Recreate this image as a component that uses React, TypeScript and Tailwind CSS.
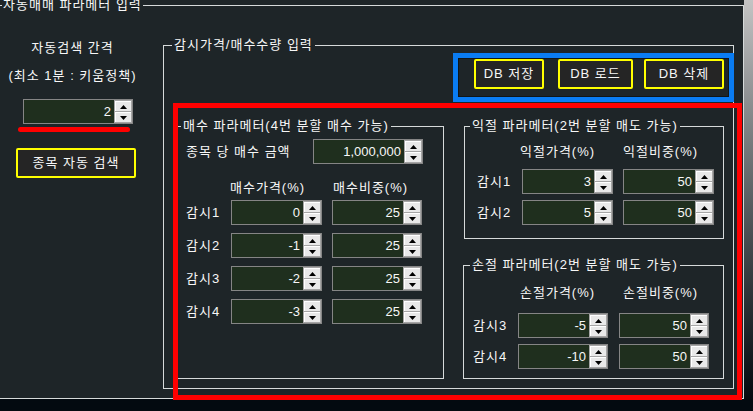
import React from "react";

const Up = () => (
  <svg width="7" height="4" viewBox="0 0 7 4"><polygon points="3.5,0 7,4 0,4" fill="#000" /></svg>
);
const Down = () => (
  <svg width="7" height="4" viewBox="0 0 7 4"><polygon points="0,0 7,0 3.5,4" fill="#000" /></svg>
);

function Spin({ value, className }: { value: string; className: string }) {
  return (
    <div className={`flex h-[25px] border border-[#858585] bg-[#1f2f1e] ${className}`}>
      <div className="flex-1 text-right pr-[3px] leading-[23px] text-[13px] tracking-normal text-[#f7f7f7]">{value}</div>
      <div className="w-[18px] flex flex-col bg-[#a5a5a5] gap-[1px] p-[1px]">
        <div className="flex-1 bg-[#e9e9e9] border-t border-l border-white flex items-center justify-center">
          <Up />
        </div>
        <div className="flex-1 bg-[#e9e9e9] border-t border-l border-white flex items-center justify-center">
          <Down />
        </div>
      </div>
    </div>
  );
}

function Btn({ label, className }: { label: string; className: string }) {
  return (
    <div
      className={`h-[30px] border-2 border-[#ffff00] rounded-[2px] bg-[#252525] flex items-center justify-center text-[13px] text-[#f7f7f7] ${className}`}
    >
      {label}
    </div>
  );
}

export default function App() {
  const buyRows = [
    ["감시1", "0", "25"],
    ["감시2", "-1", "25"],
    ["감시3", "-2", "25"],
    ["감시4", "-3", "25"],
  ];
  return (
    <div className="w-[753px] h-[411px] bg-[#1e2528] flex flex-col overflow-hidden text-[#f7f7f7] text-[13px] tracking-[1px] font-['Liberation_Sans','Noto_Sans_CJK_KR',sans-serif]">
      <div className="flex h-[399px]">
        <fieldset className="-ml-[5px] -mt-[2px] w-[749px] h-[401px] border border-[#d6dada] shrink-0">
          <legend className="ml-[6px] px-[1px] leading-[14px]">자동매매 파라메터 입력</legend>
          <div className="flex pl-[4px]">
            {/* left column */}
            <div className="w-[145px] flex flex-col items-center shrink-0">
              <div className="mt-[28px] leading-[16px]">자동검색 간격</div>
              <div className="mt-[12px] leading-[16px]">(최소 1분 : 키움정책)</div>
              <div className="relative self-start ml-[23px] mt-[15px]">
                <Spin value="2" className="w-[110px]" />
                <div className="absolute left-[-5px] top-[28px] w-[112px] h-[5px] rounded-full bg-[#ff0000]" />
              </div>
              <Btn label="종목 자동 검색" className="self-start ml-[16px] mt-[24px] w-[120px]" />
            </div>

            {/* right group */}
            <fieldset className="ml-[18px] mt-[26px] w-[571px] h-[351px] border border-[#d6dada] shrink-0">
              <legend className="ml-[8px] px-[2px] leading-[14px]">감시가격/매수수량 입력</legend>
              <div className="relative">
                <div className="flex justify-end pr-[9px] mt-[7px]">
                  <Btn label="DB 저장" className="w-[70px]" />
                  <Btn label="DB 로드" className="w-[75px] ml-[14px]" />
                  <Btn label="DB 삭제" className="w-[80px] ml-[11px]" />
                </div>

                <div className="flex mt-[30px] ml-[13px]">
                  {/* 매수 */}
                  <fieldset className="w-[267px] h-[260px] border border-[#d6dada] shrink-0">
                    <legend className="ml-[3px] px-[2px] leading-[14px]">매수 파라메터(4번 분할 매수 가능)</legend>
                    <div className="flex items-center h-[25px] mt-[6px]">
                      <div className="ml-[8px] w-[127px]">종목 당 매수 금액</div>
                      <Spin value="1,000,000" className="w-[110px]" />
                    </div>
                    <div className="flex mt-[16px] leading-[16px]">
                      <div className="ml-[52px] w-[103px]">매수가격(%)</div>
                      <div>매수비중(%)</div>
                    </div>
                    {buyRows.map((r, i) => (
                      <div key={r[0]} className={`flex items-center h-[25px] ${i === 0 ? "mt-[4px]" : "mt-[8px]"}`}>
                        <div className="ml-[8px] w-[45px]">{r[0]}</div>
                        <Spin value={r[1]} className="w-[91px]" />
                        <Spin value={r[2]} className="w-[90px] ml-[10px]" />
                      </div>
                    ))}
                  </fieldset>

                  <div className="flex flex-col ml-[20px]">
                    {/* 익절 */}
                    <fieldset className="w-[260px] h-[120px] border border-[#d6dada]">
                      <legend className="ml-[5px] px-[2px] leading-[14px]">익절 파라메터(2번 분할 매도 가능)</legend>
                      <div className="flex mt-[11px] leading-[16px]">
                        <div className="ml-[55px] w-[103px]">익절가격(%)</div>
                        <div>익절비중(%)</div>
                      </div>
                      <div className="flex items-center h-[25px] mt-[9px]">
                        <div className="ml-[12px] w-[45px]">감시1</div>
                        <Spin value="3" className="w-[91px]" />
                        <Spin value="50" className="w-[91px] ml-[10px]" />
                      </div>
                      <div className="flex items-center h-[25px] mt-[6px]">
                        <div className="ml-[12px] w-[45px]">감시2</div>
                        <Spin value="5" className="w-[91px]" />
                        <Spin value="50" className="w-[91px] ml-[10px]" />
                      </div>
                    </fieldset>

                    {/* 손절 */}
                    <fieldset className="-ml-[1px] mt-[19px] w-[261px] h-[121px] border border-[#d6dada]">
                      <legend className="ml-[6px] px-[2px] leading-[14px]">손절 파라메터(2번 분할 매도 가능)</legend>
                      <div className="flex mt-[13px] leading-[16px]">
                        <div className="ml-[56px] w-[103px]">손절가격(%)</div>
                        <div>손절비중(%)</div>
                      </div>
                      <div className="flex items-center h-[25px] mt-[12px]">
                        <div className="ml-[9px] w-[45px]">감시3</div>
                        <Spin value="-5" className="w-[90px]" />
                        <Spin value="50" className="w-[90px] ml-[11px]" />
                      </div>
                      <div className="flex items-center h-[25px] mt-[6px]">
                        <div className="ml-[9px] w-[45px]">감시4</div>
                        <Spin value="-10" className="w-[90px]" />
                        <Spin value="50" className="w-[90px] ml-[11px]" />
                      </div>
                    </fieldset>
                  </div>
                </div>

                {/* annotation overlays */}
                <div className="absolute left-[289px] top-[-6px] w-[281px] h-[49px] border-[5px] border-[#0a7cf2] pointer-events-none">
                  <div className="w-full h-full border border-[#101618]" />
                </div>
                <div className="absolute left-[9px] top-[44px] w-[569px] h-[297px] border-[5px] border-[#ff0000] pointer-events-none" />
              </div>
            </fieldset>
          </div>
        </fieldset>
        <div className="w-[9px] h-full bg-linear-to-b from-[#c4c4c4] via-[#5a5f62] to-[#050b10]" />
      </div>
      <div className="h-[12px] bg-[#030a10]" />
    </div>
  );
}
